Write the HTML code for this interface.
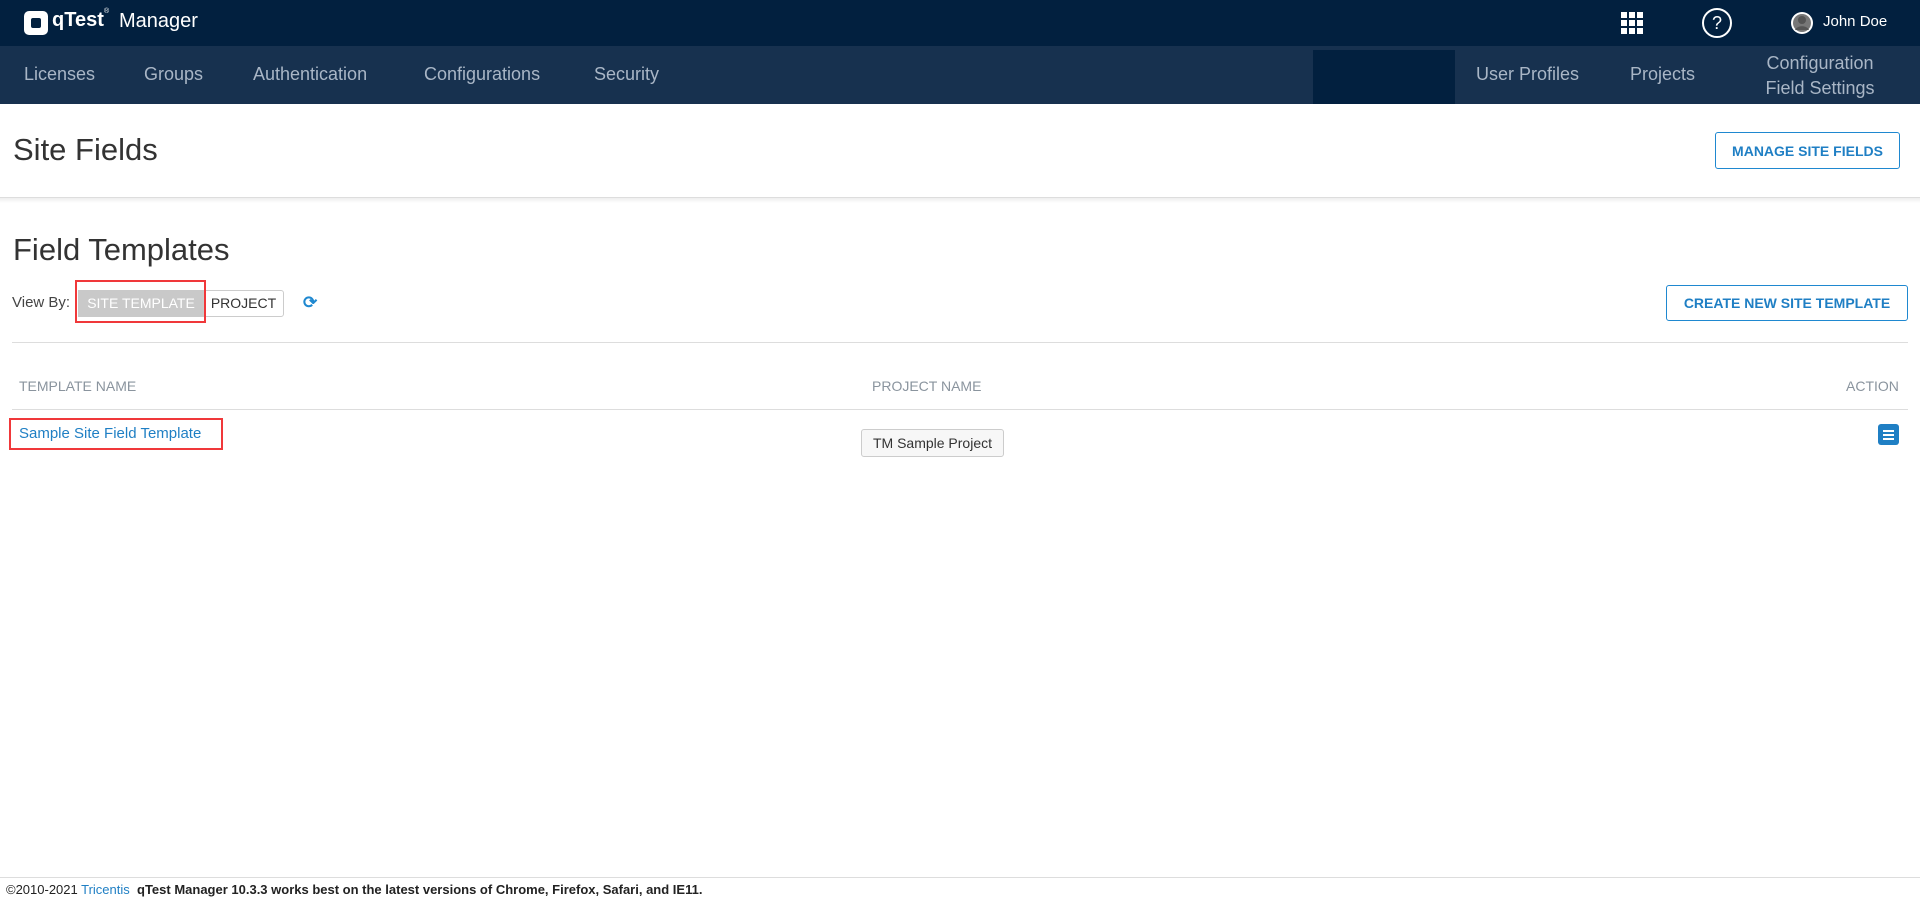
<!DOCTYPE html>
<html><head><meta charset="utf-8"><style>
*{margin:0;padding:0;box-sizing:border-box}
body{width:1920px;height:903px;position:relative;background:#fff;font-family:"Liberation Sans",Arial,sans-serif;overflow:hidden}
.a{position:absolute;white-space:nowrap}
#top{position:absolute;left:0;top:0;width:1920px;height:46px;background:#02203f}
#nav{position:absolute;left:0;top:46px;width:1920px;height:58px;background:#17314f}
.n{position:absolute;color:#a9b6c6;font-size:18px;top:64px}
.btn{position:absolute;border:1px solid #1f88d0;border-radius:3px;color:#1f7fc4;font-weight:bold;font-size:14px;display:flex;align-items:center;justify-content:center;background:#fff}
.h{color:#8a949e;font-size:14px;top:378px}
</style></head><body>
<div id="top"></div><div id="nav"></div>
<div class="a" style="left:24px;top:11px;width:24px;height:24px;border-radius:5px;background:#fff"></div>
<div class="a" style="left:31px;top:18px;width:10px;height:10px;background:#02203f;border-radius:2px"></div>
<div class="a" style="left:52px;top:9px;color:#fff;font-size:20px;font-weight:bold">qTest</div>
<div class="a" style="left:104px;top:8px;color:#fff;font-size:7px">®</div>
<div class="a" style="left:119px;top:10px;color:#fff;font-size:20px">Manager</div>
<svg class="a" style="left:1621px;top:12px" width="22" height="22"><g fill="#fff"><rect x="0" y="0" width="6" height="6"/><rect x="8" y="0" width="6" height="6"/><rect x="16" y="0" width="6" height="6"/><rect x="0" y="8" width="6" height="6"/><rect x="8" y="8" width="6" height="6"/><rect x="16" y="8" width="6" height="6"/><rect x="0" y="16" width="6" height="6"/><rect x="8" y="16" width="6" height="6"/><rect x="16" y="16" width="6" height="6"/></g></svg>
<div class="a" style="left:1702px;top:8px;width:30px;height:30px;border:2px solid #fff;border-radius:50%;color:#fff;font-size:18px;text-align:center;line-height:26px">?</div>
<svg class="a" style="left:1790px;top:11px" width="24" height="24"><circle cx="12" cy="12" r="11" fill="#fff"/><circle cx="12" cy="12" r="9" fill="#777"/><circle cx="12" cy="9" r="4" fill="#555"/><path d="M5 19c2-5 12-5 14 0" fill="#555"/></svg>
<div class="a" style="left:1823px;top:13px;color:#fff;font-size:15px">John Doe</div>
<div class="n" style="left:24px">Licenses</div>
<div class="n" style="left:144px">Groups</div>
<div class="n" style="left:253px">Authentication</div>
<div class="n" style="left:424px">Configurations</div>
<div class="n" style="left:594px">Security</div>
<div class="a" style="left:1313px;top:50px;width:142px;height:54px;background:#02203f"></div>
<div class="n" style="left:1476px">User Profiles</div>
<div class="n" style="left:1630px">Projects</div>
<div class="a" style="left:1756px;top:51px;color:#a9b6c6;font-size:18px;text-align:center;line-height:25px;width:128px;white-space:normal">Configuration Field Settings</div>
<div class="a" style="left:13px;top:132px;font-size:31px;color:#333">Site Fields</div>
<div class="btn" style="left:1715px;top:132px;width:185px;height:37px">MANAGE SITE FIELDS</div>
<div class="a" style="left:0;top:197px;width:1920px;height:6px;border-top:1px solid #ddd;background:linear-gradient(#eee,#fff)"></div>
<div class="a" style="left:13px;top:232px;font-size:31px;color:#333">Field Templates</div>
<div class="a" style="left:12px;top:294px;font-size:15px;color:#444">View By:</div>
<div class="a" style="left:78px;top:290px;width:126px;height:27px;background:#c9c9c9;color:#fff;font-size:14px;text-align:center;line-height:27px">SITE TEMPLATE</div>
<div class="a" style="left:203px;top:290px;width:81px;height:27px;border:1px solid #ccc;border-radius:0 3px 3px 0;color:#333;font-size:14px;text-align:center;line-height:25px">PROJECT</div>
<div class="a" style="left:75px;top:280px;width:131px;height:43px;border:2px solid #f0383a"></div>
<div class="a" style="left:303px;top:293px;color:#1f88d0;font-size:17px;font-weight:bold">⟳</div>
<div class="btn" style="left:1666px;top:285px;width:242px;height:36px">CREATE NEW SITE TEMPLATE</div>
<div class="a" style="left:12px;top:342px;width:1896px;height:1px;background:#ddd"></div>
<div class="a h" style="left:19px">TEMPLATE NAME</div>
<div class="a h" style="left:872px">PROJECT NAME</div>
<div class="a h" style="left:1846px">ACTION</div>
<div class="a" style="left:12px;top:409px;width:1896px;height:1px;background:#ddd"></div>
<div class="a" style="left:19px;top:425px;color:#1f7fc4;font-size:15px">Sample Site Field Template</div>
<div class="a" style="left:9px;top:418px;width:214px;height:32px;border:2px solid #f0383a"></div>
<div class="a" style="left:861px;top:429px;width:143px;height:28px;border:1px solid #ccc;border-radius:3px;background:#f7f7f7;color:#333;font-size:14px;text-align:center;line-height:26px">TM Sample Project</div>
<div class="a" style="left:1878px;top:424px;width:21px;height:21px;background:#1f7fc4;border-radius:3px"></div>
<div class="a" style="left:1883px;top:430px;width:11px;height:2px;background:#fff;box-shadow:0 4px #fff,0 8px #fff"></div>
<div class="a" style="left:0;top:877px;width:1920px;height:26px;border-top:1px solid #ddd;background:#fff"></div>
<div class="a" style="left:6px;top:882px;font-size:13px;color:#222">©2010-2021 <span style="color:#1f7fc4">Tricentis</span> &nbsp;<b>qTest Manager 10.3.3 works best on the latest versions of Chrome, Firefox, Safari, and IE11.</b></div>
</body></html>
